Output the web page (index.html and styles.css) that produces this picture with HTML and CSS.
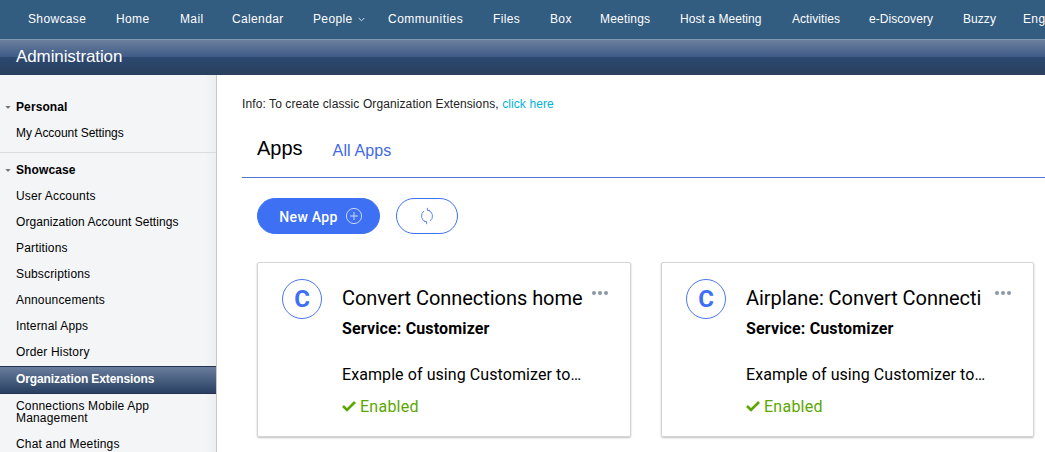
FILE: index.html
```html
<!DOCTYPE html>
<html lang="en">
<head>
<meta charset="utf-8">
<title>Administration</title>
<link rel="stylesheet" href="styles.css">
</head>
<body>
<nav class="topnav">
<a>Showcase</a><a>Home</a><a>Mail</a><a>Calendar</a>
<a class="people">People<svg width="7" height="5" viewBox="0 0 7 5"><path d="M.7 1l2.8 2.8L6.3 1" fill="none" stroke="#d5e0e9"/></svg></a>
<a class="loose">Communities</a><a>Files</a><a>Box</a><a class="snug">Meetings</a><a class="tight">Host a Meeting</a><a class="tight">Activities</a><a class="tight">e-Discovery</a><a class="tight">Buzzy</a><a>Eng</a>
</nav>
<header class="banner">Administration</header>
<div class="layout">
<aside class="sidebar">
<section class="group personal">
<h2><i class="twisty"></i>Personal</h2>
<a class="snug-link">My Account Settings</a>
</section>
<section class="group">
<h2><i class="twisty"></i>Showcase</h2>
<a>User Accounts</a>
<a class="wide">Organization Account Settings</a>
<a>Partitions</a>
<a>Subscriptions</a>
<a>Announcements</a>
<a>Internal Apps</a>
<a>Order History</a>
<a class="active">Organization Extensions</a>
<a class="after">Connections Mobile App Management</a>
<a>Chat and Meetings</a>
</section>
</aside>
<main class="content">
<p class="info">Info: To create classic Organization Extensions, <a>click here</a></p>
<div class="tabs"><h1>Apps</h1><a>All Apps</a></div>
<div class="actions">
<button class="new"><span>New App</span><svg width="18" height="18" viewBox="0 0 18 18" fill="none" stroke="#c9d6fc"><circle cx="9" cy="9" r="7.6"/><path d="M9 5v8M5 9h8"/></svg></button>
<button class="refresh" aria-label="Refresh"><svg width="14" height="18" viewBox="0 0 14 18" fill="none" stroke="#6389f4"><path d="M6.200 14.800A5.500 5.900 0 0 1 4 4M7.800 3.200A5.500 5.900 0 0 1 10 14M7.400 .8V3.400H10M6.600 17.200V14.600H4"/></svg></button>
</div>
<div class="cards">
<article class="card">
<div class="avatar">C</div>
<div class="details">
<h3>Convert Connections home</h3>
<strong>Service: Customizer</strong>
<p class="desc">Example of using Customizer to…</p>
<div class="status"><svg width="14" height="12" viewBox="0 0 14 12"><path d="M1 6l4 4 8-8" fill="none" stroke="#5aa700" stroke-width="2.600"/></svg><span>Enabled</span></div>
</div>
<div class="more"><i></i><i></i><i></i></div>
</article>
<article class="card last">
<div class="avatar">C</div>
<div class="details">
<h3>Airplane: Convert Connecti</h3>
<strong>Service: Customizer</strong>
<p class="desc">Example of using Customizer to…</p>
<div class="status"><svg width="14" height="12" viewBox="0 0 14 12"><path d="M1 6l4 4 8-8" fill="none" stroke="#5aa700" stroke-width="2.600"/></svg><span>Enabled</span></div>
</div>
<div class="more"><i></i><i></i><i></i></div>
</article>
</div>
</main>
</div>
</body>
</html>
```
FILE: styles.css
```css
* { box-sizing: border-box; }
body { margin: 0; width: 1045px; height: 452px; overflow: hidden; background: #fff; color: #000; font: 12px/14px "Liberation Sans", Arial, sans-serif; }
h1, h2, h3, p { margin: 0; }
.topnav { height: 39px; padding: 0 0 1px 28px; display: grid; grid-template-columns: 88px 64px 52px 81px 75px 105px 57px 50px 80px 112px 77px 94px 60px 22px; align-items: center; background: #325c80; color: #fff; letter-spacing: .36px; white-space: nowrap; }
.loose { letter-spacing: .47px; }
.snug { letter-spacing: .2px; }
.tight { letter-spacing: .06px; }
.people { display: flex; align-items: center; gap: 5px; }
.banner { height: 36px; padding-left: 16px; border-top: 1px solid #8297b1; background: linear-gradient(#6d809d 0, #3e5a86 17px, #2d4971 17px, #293f5e 35px); color: #fff; font-size: 17px; line-height: 33px; letter-spacing: -.1px; }
.layout { height: 377px; display: flex; overflow: hidden; }
.sidebar { width: 217px; flex: none; border-right: 1px solid #c8c8c8; background: linear-gradient(90deg, #f3f5f7 205px, #eceef0 216px); letter-spacing: .17px; line-height: 12px; }
.group { display: flex; flex-direction: column; padding-top: 4px; }
.personal { height: 78px; padding-top: 19px; border-bottom: 1px solid #dcdcdc; }
.group h2 { height: 26px; padding-left: 5px; display: flex; align-items: center; gap: 5px; font-size: 12px; line-height: 12px; letter-spacing: .1px; }
.twisty { width: 6px; height: 3px; background: #777; clip-path: polygon(0 0, 100% 0, 60% 100%, 40% 100%); }
.group a { padding: 7px 50px 7px 16px; }
.group .snug-link { letter-spacing: -.06px; }
.group .wide { padding-right: 0; letter-spacing: .06px; }
.group .active { height: 28px; margin-top: 1px; padding-top: 6px; border: solid #20334f; border-width: 1px 0; background: linear-gradient(#697e9d, #293f61); color: #fff; font-weight: bold; letter-spacing: -.1px; }
.group .after { padding-top: 6px; }
.content { flex: none; width: 828px; padding: 22px 0 0 25px; }
.info { color: #222; height: 14px; letter-spacing: .1px; }
.info a { color: #00b4d8; }
.tabs { height: 67px; padding: 21px 0 0 15px; display: flex; align-items: flex-start; gap: 30px; border-bottom: 1px solid #5474d5; }
.tabs h1 { font-size: 20px; line-height: 32px; font-weight: normal; }
.tabs a { color: #4169e8; font-size: 16px; line-height: 37px; letter-spacing: .12px; }
.actions { padding: 20px 0 0 15px; display: flex; gap: 16px; }
button { height: 36px; display: flex; align-items: center; justify-content: center; border-radius: 18px; border: 1px solid #3d70f2; padding: 0; }
.new { width: 123px; padding-left: 5px; gap: 7px; background: #3d70f2; color: #fff; font: 500 14px/18px Roboto, sans-serif; letter-spacing: .3px; }
.new span { padding-top: 2px; }
.refresh { width: 62px; background: #fff; }
.cards { padding: 28px 0 0 15px; display: flex; gap: 30px; }
.card { position: relative; width: 374px; height: 175px; flex: none; padding: 16px 0 0 24px; display: flex; gap: 20px; border: 1px solid #d5d5d5; border-radius: 2px; box-shadow: 0 1px 2px rgba(0,0,0,.25); font-family: Roboto, sans-serif; }
.last { width: 373px; }
.avatar { width: 40px; height: 40px; border: 1px solid #4b76ee; border-radius: 50%; color: #3d70f2; display: flex; align-items: center; justify-content: center; font: bold 24px/38px Roboto, sans-serif; }
.details { width: 241px; overflow: hidden; white-space: nowrap; }
.details h3 { padding-top: 6px; font-size: 20px; line-height: 26px; font-weight: 400; letter-spacing: -.05px; }
.details strong { display: block; margin-top: 6px; font-size: 16px; line-height: 24px; font-weight: 700; letter-spacing: .15px; }
.desc { margin-top: 22px; font-size: 16px; line-height: 24px; letter-spacing: .08px; }
.status { display: flex; align-items: center; gap: 4px; margin-top: 8px; color: #5aa700; font-size: 16px; line-height: 24px; letter-spacing: .25px; }
.status svg { position: relative; top: -1px; }
.more { position: absolute; left: 334px; top: 28px; display: flex; gap: 2px; }
.last .more { left: 333px; }
.more i { width: 4px; height: 4px; border-radius: 50%; background: #8a98a8; }
```
